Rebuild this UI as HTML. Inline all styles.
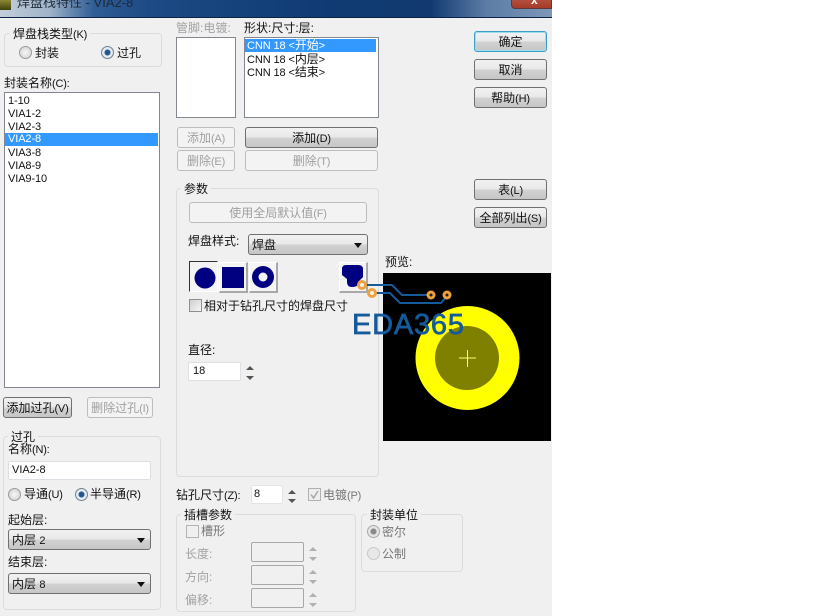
<!DOCTYPE html>
<html><head><meta charset="utf-8"><style>
html,body{margin:0;padding:0;background:#fff;}
#d{position:relative;width:819px;height:616px;overflow:hidden;background:#fff;font:12px/14px "Liberation Sans","Noto Sans CJK SC",sans-serif;color:#111;}
#w{position:absolute;left:0;top:18px;width:552px;height:598px;background:#f0f0f0;}
i{font-style:normal;font-size:11px;letter-spacing:-.2px;}
.a{position:absolute;white-space:nowrap;}
.g{color:#a2a2a2;}
.box{position:absolute;background:#fff;border:1px solid #828790;box-sizing:border-box;}
.btn{position:absolute;box-sizing:border-box;border:1px solid #707070;border-radius:3px;background:linear-gradient(#f2f2f2 0,#e8e8e8 48%,#d2d2d2 52%,#c6c6c6 100%);text-align:center;line-height:20px;height:21px;color:#111;}
.dis{border-color:#bdbdbd;background:#f3f3f3;color:#a0a0a0;}
.fs{position:absolute;box-sizing:border-box;border:1px solid #dcdcdc;border-radius:4px;}
.lg{position:absolute;background:#f0f0f0;padding:0 3px;white-space:nowrap;line-height:14px;}
.sel{position:absolute;box-sizing:border-box;height:21px;border:1px solid #707070;border-radius:3px;background:linear-gradient(#f2f2f2 0,#e8e8e8 48%,#d2d2d2 52%,#c6c6c6 100%);line-height:20px;padding-left:3px;}
.sel:after{content:"";position:absolute;right:5px;top:8px;border:4px solid transparent;border-top:5px solid #111;border-bottom:0;}
.li{position:absolute;height:13px;line-height:13px;padding-left:3px;white-space:nowrap;font-size:11px;letter-spacing:-.1px;}
.li b{font-weight:normal;font-size:12px;}
.hi{background:#3399ff;color:#fff;}
.r{position:absolute;width:13px;height:13px;border-radius:50%;box-sizing:border-box;border:1px solid #9a9a9a;background:radial-gradient(#f6f6f6,#cfcfcf);}
.r.on{border-color:#6f8294;background:radial-gradient(#1e4f88 0,#2b5f96 36%,#e8eef4 42%,#d5dde4 100%);}
.r.off{border-color:#c8c8c8;background:#e8e8e8;}
.r.gon{border-color:#aaa;background:radial-gradient(#8a8a8a 0,#8a8a8a 36%,#e4e4e4 42%);}
.cb{position:absolute;box-sizing:border-box;width:13px;height:13px;border:1px solid #8e8f8f;background:linear-gradient(135deg,#cfcfcf,#f6f6f6);}
.up,.dn{position:absolute;width:0;height:0;border-left:4px solid transparent;border-right:4px solid transparent;}
.up{border-bottom:4px solid #555;}.dn{border-top:4px solid #555;}
.gu{border-bottom-color:#b0b0b0;}.gd{border-top-color:#b0b0b0;}
.ed{position:absolute;box-sizing:border-box;background:#fff;border:1px solid #dcdfe3;border-radius:2px;line-height:17px;padding-left:3px;font-size:11px;}
.edd{position:absolute;box-sizing:border-box;width:53px;height:20px;border:1px solid #a8a8a8;border-radius:2px;background:#f0f0f0;}
.tb{position:absolute;top:262px;width:29px;height:31px;box-sizing:border-box;background:#f4f4f4;border-style:solid;border-width:1px 2px 2px 1px;border-color:#fff #a8a8a8 #a8a8a8 #fff;}
</style></head><body><div id="d">
<div class="a" style="left:0;top:0;width:552px;height:18px;background:linear-gradient(90deg,#c5cfda 0,#9fb3c9 9%,#2f5d95 17%,#1d4a84 27%,#0f3a73 60%,#123a70 78%,#5b7ca6 88%,#7f97b8 100%);border-bottom:1px solid #0c2347;box-sizing:border-box;"></div>
<div class="a" style="left:0;top:0;width:11px;height:10px;background:linear-gradient(#8a8a30,#40420e);"></div>
<div class="a" style="left:17px;top:-5px;font-size:13px;line-height:16px;color:#1c2a3a;">焊盘栈特性 - VIA2-8</div>
<div class="a" style="left:511px;top:-8px;width:41px;height:17px;background:linear-gradient(#b86050,#a83a28);border:1px solid #5a3a3a;border-radius:0 0 0 4px;box-sizing:border-box;"></div>
<div class="a" style="left:531px;top:-7px;color:#fff;font-weight:bold;font-size:12px;">x</div>
<div id="w"></div>

<div class="fs" style="left:4px;top:33px;width:158px;height:34px;"></div>
<div class="lg" style="left:10px;top:27px;">焊盘栈类型<i>(K)</i></div>
<div class="r" style="left:19px;top:46px;"></div><div class="a" style="left:35px;top:46px;">封装</div>
<div class="r on" style="left:101px;top:46px;"></div><div class="a" style="left:117px;top:46px;">过孔</div>

<div class="a" style="left:4px;top:76px;">封装名称<i>(C):</i></div>
<div class="box" style="left:4px;top:92px;width:156px;height:296px;"></div>
<div class="li" style="left:5px;top:95px;">1-10</div>
<div class="li" style="left:5px;top:108px;">VIA1-2</div>
<div class="li" style="left:5px;top:121px;">VIA2-3</div>
<div class="li hi" style="left:5px;top:133px;width:150px;">VIA2-8</div>
<div class="li" style="left:5px;top:147px;">VIA3-8</div>
<div class="li" style="left:5px;top:160px;">VIA8-9</div>
<div class="li" style="left:5px;top:173px;">VIA9-10</div>

<div class="btn" style="left:3px;top:397px;width:69px;height:21px;">添加过孔<i>(V)</i></div>
<div class="btn dis" style="left:87px;top:397px;width:66px;height:21px;">删除过孔<i>(I)</i></div>

<div class="fs" style="left:3px;top:436px;width:158px;height:174px;"></div>
<div class="lg" style="left:8px;top:430px;">过孔</div>
<div class="a" style="left:8px;top:442px;">名称<i>(N):</i></div>
<div class="ed" style="left:8px;top:461px;width:143px;height:19px;">VIA2-8</div>
<div class="r" style="left:8px;top:488px;"></div><div class="a" style="left:24px;top:487px;">导通<i>(U)</i></div>
<div class="r on" style="left:75px;top:488px;"></div><div class="a" style="left:90px;top:487px;">半导通<i>(R)</i></div>
<div class="a" style="left:8px;top:513px;">起始层:</div>
<div class="sel" style="left:8px;top:529px;width:143px;">内层 <i>2</i></div>
<div class="a" style="left:8px;top:555px;">结束层:</div>
<div class="sel" style="left:8px;top:573px;width:143px;">内层 <i>8</i></div>

<div class="a g" style="left:176px;top:21px;">管脚:电镀:</div>
<div class="a" style="left:244px;top:21px;">形状:尺寸:层:</div>
<div class="box" style="left:176px;top:37px;width:60px;height:81px;"></div>
<div class="box" style="left:244px;top:37px;width:135px;height:81px;"></div>
<div class="li hi" style="left:245px;top:39px;width:129px;padding-left:2px;">CNN 18 &lt;<b>开始</b>&gt;</div>
<div class="li" style="left:245px;top:53px;padding-left:2px;">CNN 18 &lt;<b>内层</b>&gt;</div>
<div class="li" style="left:245px;top:66px;padding-left:2px;">CNN 18 &lt;<b>结束</b>&gt;</div>

<div class="btn dis" style="left:177px;top:127px;width:58px;">添加<i>(A)</i></div>
<div class="btn" style="left:245px;top:127px;width:133px;">添加<i>(D)</i></div>
<div class="btn dis" style="left:177px;top:150px;width:58px;">删除<i>(E)</i></div>
<div class="btn dis" style="left:245px;top:150px;width:133px;">删除<i>(T)</i></div>

<div class="fs" style="left:176px;top:188px;width:203px;height:289px;"></div>
<div class="lg" style="left:181px;top:182px;">参数</div>
<div class="btn dis" style="left:189px;top:202px;width:178px;">使用全局默认值<i>(F)</i></div>
<div class="a" style="left:188px;top:234px;">焊盘样式:</div>
<div class="sel" style="left:248px;top:234px;width:120px;">焊盘</div>

<div class="tb" style="left:189px;top:261px;border-width:1px;border-color:#333 #fff #fff #333;"></div>
<div class="tb" style="left:219px;"></div>
<div class="tb" style="left:249px;"></div>
<div class="tb" style="left:339px;"></div>
<svg class="a" style="left:0;top:0;" width="819" height="616" viewBox="0 0 819 616">
<circle cx="205" cy="278" r="10.5" fill="#000080"/>
<rect x="222" y="267" width="22" height="21" fill="#000080"/>
<circle cx="263" cy="277" r="11" fill="#000080"/><circle cx="263" cy="277" r="4.5" fill="#f4f4f4"/>
<path d="M342 269 Q342 265 346 265 H358 Q363 265 363 269 V277 L358 282 V285 Q356 287 352 287 Q347 287 347 282 V279 L342 275Z" fill="#000080"/>
<rect x="383" y="273" width="168" height="168" fill="#000"/>
<circle cx="467.500" cy="358" r="52" fill="#ffff00"/>
<circle cx="467" cy="358" r="32" fill="#808000"/>
<path d="M459 358H476M467.500 350V367" stroke="#ffff66" stroke-width="1" fill="none"/>
<path d="M366 285H392L402 295H431" stroke="#155a9a" stroke-width="2" fill="none"/>
<path d="M376 293H390L400 303H441L447 296" stroke="#155a9a" stroke-width="2" fill="none"/>
<circle cx="362" cy="285" r="3.500" fill="#f1f1f1" stroke="#efa23c" stroke-width="3"/>
<circle cx="372" cy="293" r="3.500" fill="#f1f1f1" stroke="#efa23c" stroke-width="3"/>
<circle cx="431" cy="295" r="3" fill="#222" stroke="#efa23c" stroke-width="3"/>
<circle cx="447" cy="295" r="3" fill="#222" stroke="#efa23c" stroke-width="3"/>
<text x="352" y="334" font-family="Liberation Sans" font-size="29" fill="#155a9a" stroke="#155a9a" stroke-width=".7" textLength="112">EDA365</text>
</svg>
<div class="cb" style="left:189px;top:299px;"></div>
<div class="a" style="left:204px;top:299px;">相对于钻孔尺寸的焊盘尺寸</div>
<div class="a" style="left:188px;top:343px;">直径:</div>
<div class="ed" style="left:188px;top:362px;width:53px;height:19px;padding-left:4px;">18</div>
<div class="up" style="left:246px;top:366px;"></div><div class="dn" style="left:246px;top:376px;"></div>
<div class="a" style="left:385px;top:255px;">预览:</div>

<div class="btn" style="left:474px;top:31px;width:73px;border-color:#3c9fc8;box-shadow:inset 0 0 0 1px #9fdcef;">确定</div>
<div class="btn" style="left:474px;top:59px;width:73px;">取消</div>
<div class="btn" style="left:474px;top:87px;width:73px;">帮助<i>(H)</i></div>
<div class="btn" style="left:474px;top:179px;width:73px;">表<i>(L)</i></div>
<div class="btn" style="left:474px;top:207px;width:73px;">全部列出<i>(S)</i></div>

<div class="a" style="left:176px;top:488px;">钻孔尺寸<i>(Z):</i></div>
<div class="ed" style="left:251px;top:485px;width:32px;height:19px;padding-left:2px;border-color:#e2e4e6;">8</div>
<div class="up" style="left:288px;top:490px;"></div><div class="dn" style="left:288px;top:499px;"></div>
<div class="cb" style="left:308px;top:488px;border-color:#b0b0b0;background:#eee;"></div>
<svg class="a" style="left:308px;top:488px;" width="13" height="13"><path d="M3 6.500L5.500 10L10 3" stroke="#a8a8a8" stroke-width="1.500" fill="none"/></svg>
<div class="a g" style="left:323px;top:488px;color:#777;">电镀<i>(P)</i></div>

<div class="fs" style="left:176px;top:514px;width:180px;height:98px;"></div>
<div class="lg" style="left:181px;top:508px;">插槽参数</div>
<div class="cb" style="left:186px;top:525px;border-color:#b4b4b4;background:#f0f0f0;"></div>
<div class="a g" style="left:201px;top:524px;color:#777;">槽形</div>
<div class="a g" style="left:185px;top:547px;">长度:</div>
<div class="edd" style="left:251px;top:542px;"></div>
<div class="up gu" style="left:309px;top:547px;"></div><div class="dn gd" style="left:309px;top:557px;"></div>
<div class="a g" style="left:185px;top:570px;">方向:</div>
<div class="edd" style="left:251px;top:565px;"></div>
<div class="up gu" style="left:309px;top:570px;"></div><div class="dn gd" style="left:309px;top:580px;"></div>
<div class="a g" style="left:185px;top:593px;">偏移:</div>
<div class="edd" style="left:251px;top:588px;"></div>
<div class="up gu" style="left:309px;top:593px;"></div><div class="dn gd" style="left:309px;top:603px;"></div>

<div class="fs" style="left:361px;top:514px;width:102px;height:58px;"></div>
<div class="lg" style="left:367px;top:508px;">封装单位</div>
<div class="r gon" style="left:367px;top:525px;"></div><div class="a g" style="left:382px;top:525px;color:#777;">密尔</div>
<div class="r off" style="left:367px;top:547px;"></div><div class="a g" style="left:382px;top:547px;color:#777;">公制</div>
</div></body></html>
